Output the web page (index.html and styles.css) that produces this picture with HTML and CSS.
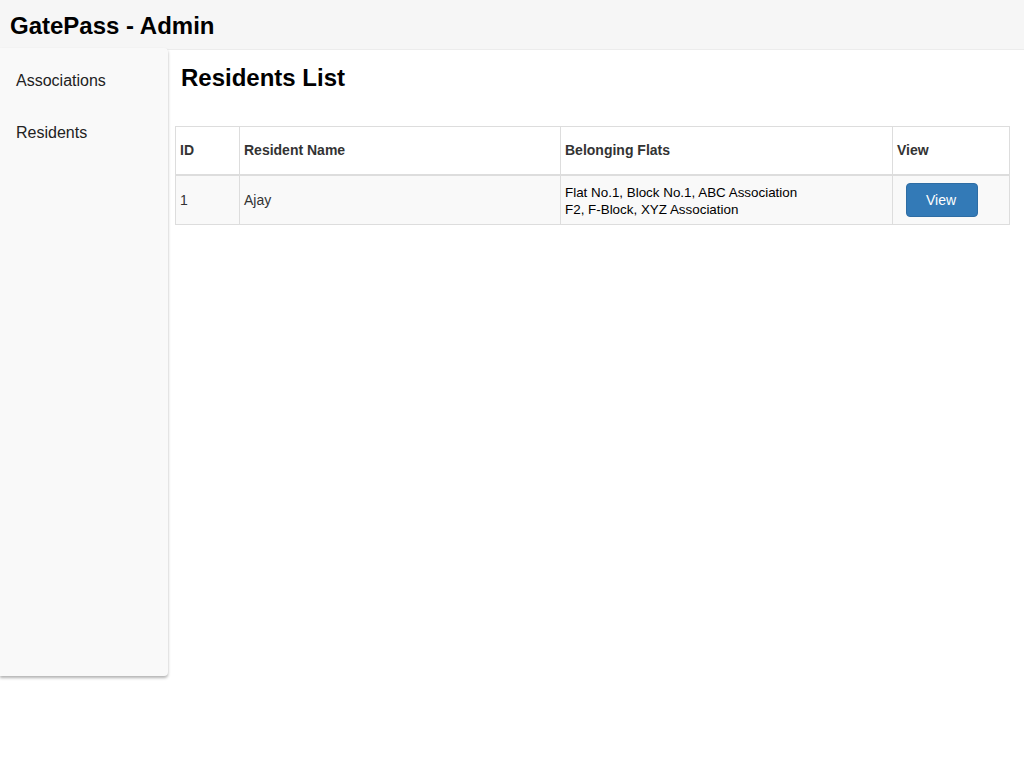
FILE: index.html
```html
<!DOCTYPE html>
<html>
<head>
<meta charset="utf-8">
<title>GatePass - Admin</title>
<link rel="stylesheet" href="styles.css">
</head>
<body>
<header class="topbar"><h1 class="brand">GatePass - Admin</h1></header>
<div class="layout">
  <nav class="sidebar">
    <a class="nav-item" href="#">Associations</a>
    <a class="nav-item" href="#">Residents</a>
  </nav>
  <main class="main">
    <h2 class="page-title">Residents List</h2>
    <table class="grid">
      <colgroup>
        <col class="c-id"><col class="c-name"><col class="c-flats"><col class="c-view">
      </colgroup>
      <thead>
        <tr><th>ID</th><th>Resident Name</th><th>Belonging Flats</th><th>View</th></tr>
      </thead>
      <tbody>
        <tr>
          <td>1</td>
          <td>Ajay</td>
          <td class="flats">Flat No.1, Block No.1, ABC Association<br>F2, F-Block, XYZ Association</td>
          <td><button class="btn">View</button></td>
        </tr>
      </tbody>
    </table>
  </main>
</div>
</body>
</html>
```
FILE: styles.css
```css
html, body { margin: 0; padding: 0; }
body {
  font-family: "Liberation Sans", Arial, sans-serif;
  color: #333;
  background: #fff;
  min-height: 768px;
}
.topbar {
  background: #f6f6f6;
  border-bottom: 1px solid #ececec;
  padding: 2px 10px 0;
  box-sizing: border-box;
  height: 50px;
  display: flex;
  align-items: center;
}
.brand {
  margin: 0;
  font-size: 24px;
  font-weight: bold;
  color: #000;
}
.layout {
  display: flex;
  align-items: flex-start;
  padding-bottom: 20px;
}
.sidebar {
  width: 168px;
  height: 628px;
  margin-top: -2px;
  background: #f9f9f9;
  border-radius: 0 4px 4px 0;
  box-shadow: 0 2px 3px rgba(0,0,0,0.3);
  display: flex;
  flex-direction: column;
  padding-top: 21px;
  box-sizing: border-box;
}
.nav-item {
  display: block;
  padding: 0 16px;
  height: 52px;
  line-height: 24px;
  font-size: 16px;
  color: #222;
  text-decoration: none;
}
.main {
  flex: 1;
  padding: 0 14px 0 7px;
}
.page-title {
  margin: 14px 0 34px 6px;
  font-size: 24px;
  line-height: 28px;
  font-weight: bold;
  color: #000;
}
.grid {
  width: 100%;
  border-collapse: collapse;
  font-size: 14px;
}
.c-id { width: 64px; }
.c-name { width: 321px; }
.c-flats { width: 332px; }
.grid th, .grid td {
  border: 1px solid #ddd;
  padding: 4px 4px;
  text-align: left;
  vertical-align: middle;
}
.grid th {
  height: 39px;
  padding: 3px 4px 5px;
  font-weight: bold;
  color: #333;
  border-bottom: 2px solid #ddd;
}
.grid tbody tr { background: #f9f9f9; }
.grid td { height: 40px; }
.grid td.flats {
  padding: 5px 4px 3px;
  font-size: 13.4px;
  line-height: 17px;
  color: #000;
}
.btn {
  margin-left: 9px;
  width: 72px;
  height: 34px;
  padding: 0 2px 0 0;
  border: 1px solid #2e6da4;
  border-radius: 4px;
  background: #337ab7;
  color: #fff;
  font-family: inherit;
  font-size: 14px;
}
```
